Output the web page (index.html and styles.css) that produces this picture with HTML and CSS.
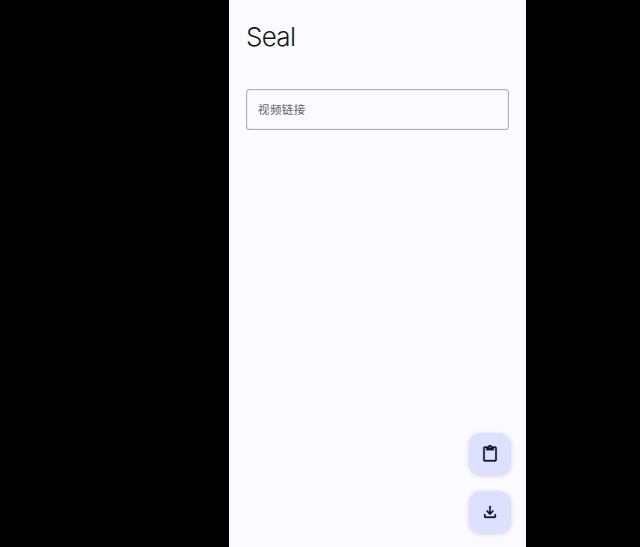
FILE: index.html
```html
<!DOCTYPE html>
<html lang="zh-CN">
<head>
<meta charset="utf-8">
<title>Seal</title>
<link rel="stylesheet" href="styles.css">
</head>
<body>
<main class="app">
  <h1 class="title">Seal</h1>
  <div class="field"><span class="label">视频链接</span></div>
  <div class="actions">
    <button class="fab" aria-label="粘贴"><svg viewBox="0 0 24 24"><path d="M19 2h-4.180C14.400.840 13.300 0 12 0S9.600.840 9.180 2H5c-1.100 0-2 .9-2 2v16c0 1.100.9 2 2 2h14c1.100 0 2-.9 2-2V4c0-1.100-.9-2-2-2zm-7 0c.550 0 1 .450 1 1s-.450 1-1 1-1-.450-1-1 .450-1 1-1zm7 18H5V4h2v3h10V4h2v16z"/></svg></button>
    <button class="fab" aria-label="下载"><svg viewBox="0 0 24 24"><path d="M18 15v3H6v-3H4v3c0 1.100.9 2 2 2h12c1.100 0 2-.9 2-2v-3h-2zm-1-4-1.410-1.410L13 12.170V4h-2v8.170L8.410 9.590 7 11l5 5 5-5z"/></svg></button>
  </div>
</main>
</body>
</html>
```
FILE: styles.css
```css
body { margin: 0; background: #000; }
.app {
  box-sizing: border-box;
  display: flex;
  flex-direction: column;
  width: 297px;
  height: 547px;
  margin-left: 229px;
  padding: 20px 15px 14px 17px;
  background: #fbfaff;
  font-family: Roboto, "Noto Sans CJK SC", sans-serif;
}
.title {
  margin: 0 0 35px;
  color: #17171b;
  font: 300 26px/34px Inter, sans-serif;
  letter-spacing: -0.7px;
}
.field {
  box-sizing: border-box;
  display: flex;
  align-items: center;
  width: 263px;
  height: 41px;
  padding-left: 11px;
  border: 1px solid #aeadb3;
  border-radius: 3px;
  box-shadow: inset 0 0 1px #8b8a90;
}
.label {
  color: #64646a;
  font-size: 11.5px;
  line-height: 16px;
  letter-spacing: .4px;
}
.actions {
  display: flex;
  flex-direction: column;
  align-items: flex-end;
  gap: 16px;
  margin-top: auto;
}
.fab {
  display: grid;
  place-items: center;
  width: 42px;
  height: 42px;
  padding: 0;
  border: 0;
  border-radius: 12px;
  background: #dce1ff;
  box-shadow: 0 1px 4px rgba(40, 40, 90, .2);
}
.fab svg {
  width: 18px;
  height: 18px;
  margin-right: 1px;
  fill: #10152e;
  stroke: #10152e;
  stroke-width: .4;
}
```
